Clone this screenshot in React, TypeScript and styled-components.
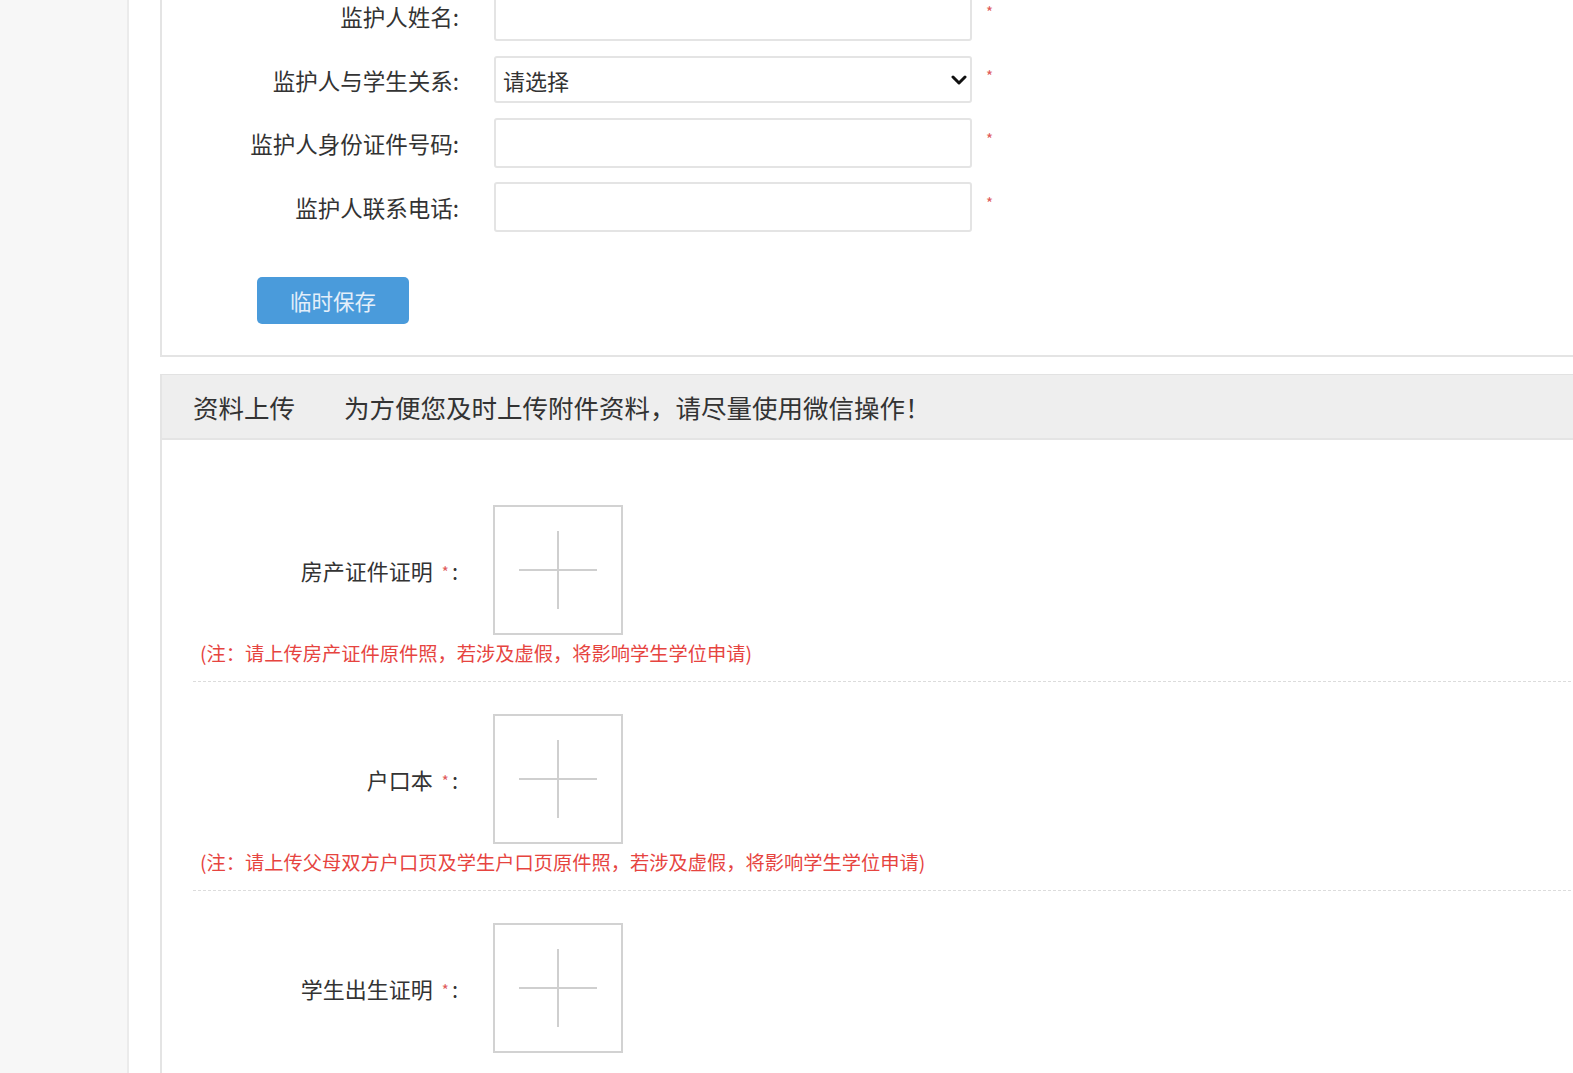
import React from "react";
import styled, { createGlobalStyle } from "styled-components";

const GlobalStyle = createGlobalStyle`
  html, body {
    margin: 0;
    padding: 0;
    height: 100%;
    overflow: hidden;
    background: #fff;
  }
  body {
    font-family: "Noto Sans CJK SC", "Noto Sans", sans-serif;
    color: #333;
  }
  * {
    box-sizing: border-box;
  }
`;

const Page = styled.div`
  display: flex;
  height: 100vh;
  overflow: hidden;
`;

const Sidebar = styled.div`
  width: 129px;
  flex-shrink: 0;
  background: #f7f7f7;
  border-right: 2px solid #ebebeb;
`;

const Main = styled.div`
  flex: 1;
  padding-left: 31px;
  margin-right: -60px;
`;

const Panel = styled.div`
  border: 2px solid #e4e4e4;
  border-top: none;
  background: #fff;
`;

const FormPanel = styled(Panel)`
  margin-top: -9px;
  padding-bottom: 31px;
`;

const UploadPanel = styled(Panel)`
  margin-top: 17px;
  border-top: 1px solid #e2e2e2;
`;

const Rows = styled.div`
  display: flex;
  flex-direction: column;
  gap: 13.5px;
`;

const Row = styled.div`
  display: grid;
  grid-template-columns: 297px 478px auto;
  column-gap: 35px;
  align-items: center;
  height: 50px;
`;

const Label = styled.label`
  text-align: right;
  font-size: 22.5px;
  color: #333;
  white-space: nowrap;
`;

const Input = styled.input`
  width: 478px;
  height: 50px;
  border: 2px solid #e4e4e4;
  border-radius: 3px;
  background: #fff;
  outline: none;
  padding: 0 8px;
  font-family: inherit;
  font-size: 21px;
`;

const SelectWrap = styled.div`
  position: relative;
  width: 478px;
  height: 47px;
`;

const Select = styled.select`
  appearance: none;
  width: 100%;
  height: 100%;
  border: 2px solid #e4e4e4;
  border-radius: 3px;
  background: #fff;
  padding: 0 7px;
  font-family: inherit;
  font-size: 22px;
  color: #333;
  outline: none;
`;

const Chevron = styled.svg`
  position: absolute;
  right: 5px;
  top: 18px;
  pointer-events: none;
`;

const Required = styled.span`
  color: #e05a5a;
  font-size: 15px;
  align-self: start;
  margin-top: 10px;
  margin-left: -21px;
`;

const SaveButton = styled.button`
  margin: 45px 0 0 95px;
  width: 152px;
  height: 47px;
  border: none;
  border-radius: 5px;
  background: #4a9bdb;
  color: #e3effa;
  font-family: inherit;
  font-size: 21.5px;
  cursor: pointer;
`;

const PanelHeader = styled.div`
  display: flex;
  align-items: center;
  gap: 49px;
  height: 65px;
  padding-left: 31px;
  background: #eeeeee;
  border-bottom: 2px solid #e4e4e4;
  font-size: 25.5px;
  color: #333;
`;

const UploadBody = styled.div`
  padding: 33px 0 60px;
`;

const UploadRow = styled.div`
  margin: 0 0 0 31px;
  padding: 32px 0 17px;
  border-bottom: 1px dashed #dcdcdc;

  &:last-child {
    border-bottom: none;
  }
`;

const UploadLine = styled.div`
  display: grid;
  grid-template-columns: 265px 130px;
  column-gap: 35px;
  align-items: center;
`;

const UploadLabel = styled.div`
  text-align: right;
  font-size: 22px;
  color: #333;
  white-space: nowrap;
`;

const Star = styled.span`
  color: #e05a5a;
  font-size: 15px;
  margin: 0 3px 0 9px;
  vertical-align: 2px;
`;

const UploadBox = styled.div`
  width: 130px;
  height: 130px;
  border: 2px solid #d2d2d2;
  display: flex;
  align-items: center;
  justify-content: center;
  cursor: pointer;
`;

const Note = styled.p`
  margin: 7px 0 0 7px;
  font-size: 19.25px;
  line-height: 22px;
  color: #e6443f;
`;

const fields = [
  { label: "监护人姓名" },
  { label: "监护人与学生关系", select: true },
  { label: "监护人身份证件号码" },
  { label: "监护人联系电话" },
];

const uploads = [
  {
    label: "房产证件证明",
    note: "(注：请上传房产证件原件照，若涉及虚假，将影响学生学位申请)",
  },
  {
    label: "户口本",
    note: "(注：请上传父母双方户口页及学生户口页原件照，若涉及虚假，将影响学生学位申请)",
  },
  { label: "学生出生证明", note: "" },
];

const PlusIcon = () => (
  <svg width="80" height="80" viewBox="0 0 80 80">
    <line x1="1" y1="40" x2="79" y2="40" stroke="#cfcfcf" strokeWidth="2" />
    <line x1="40" y1="1" x2="40" y2="79" stroke="#cfcfcf" strokeWidth="2" />
  </svg>
);

export default function App() {
  return (
    <>
      <GlobalStyle />
      <Page>
        <Sidebar />
        <Main>
          <FormPanel>
            <Rows>
              {fields.map((f) => (
                <Row key={f.label}>
                  <Label>{f.label}:</Label>
                  {f.select ? (
                    <SelectWrap>
                      <Select defaultValue="">
                        <option value="">请选择</option>
                        <option value="father">父亲</option>
                        <option value="mother">母亲</option>
                      </Select>
                      <Chevron width="16" height="12" viewBox="0 0 16 12">
                        <path
                          d="M2 3 L8 9 L14 3"
                          fill="none"
                          stroke="#111"
                          strokeWidth="3"
                          strokeLinecap="round"
                          strokeLinejoin="round"
                        />
                      </Chevron>
                    </SelectWrap>
                  ) : (
                    <Input type="text" />
                  )}
                  <Required>*</Required>
                </Row>
              ))}
            </Rows>
            <SaveButton>临时保存</SaveButton>
          </FormPanel>

          <UploadPanel>
            <PanelHeader>
              <span>资料上传</span>
              <span>为方便您及时上传附件资料，请尽量使用微信操作！</span>
            </PanelHeader>
            <UploadBody>
              {uploads.map((u) => (
                <UploadRow key={u.label}>
                  <UploadLine>
                    <UploadLabel>
                      {u.label}
                      <Star>*</Star>:
                    </UploadLabel>
                    <UploadBox>
                      <PlusIcon />
                    </UploadBox>
                  </UploadLine>
                  {u.note && <Note>{u.note}</Note>}
                </UploadRow>
              ))}
            </UploadBody>
          </UploadPanel>
        </Main>
      </Page>
    </>
  );
}
